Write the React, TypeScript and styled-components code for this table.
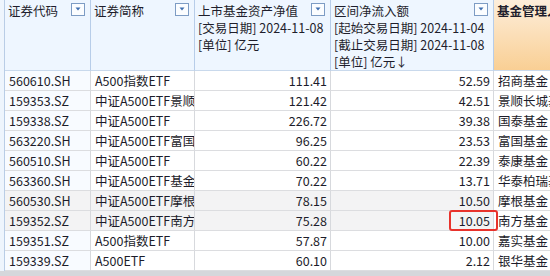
import React from 'react'
import styled, { createGlobalStyle } from 'styled-components'

interface Row {
    code: string
    name: string
    nav: string
    flow: string
    manager: string
    shaded?: boolean
    marked?: boolean
}

const rows: Row[] = [
    { code: '560610.SH', name: 'A500指数ETF', nav: '111.41', flow: '52.59', manager: '招商基金' },
    { code: '159353.SZ', name: '中证A500ETF景顺', nav: '121.42', flow: '42.51', manager: '景顺长城基金' },
    { code: '159338.SZ', name: '中证A500ETF', nav: '226.72', flow: '39.38', manager: '国泰基金' },
    { code: '563220.SH', name: '中证A500ETF富国', nav: '96.25', flow: '23.53', manager: '富国基金' },
    { code: '560510.SH', name: '中证A500ETF', nav: '60.22', flow: '22.39', manager: '泰康基金' },
    { code: '563360.SH', name: '中证A500ETF基金', nav: '70.22', flow: '13.71', manager: '华泰柏瑞基金' },
    { code: '560530.SH', name: '中证A500ETF摩根', nav: '78.15', flow: '10.50', manager: '摩根基金', shaded: true },
    { code: '159352.SZ', name: '中证A500ETF南方', nav: '75.28', flow: '10.05', manager: '南方基金', shaded: true, marked: true },
    { code: '159351.SZ', name: 'A500指数ETF', nav: '57.87', flow: '10.00', manager: '嘉实基金' },
    { code: '159339.SZ', name: 'A500ETF', nav: '60.10', flow: '2.12', manager: '银华基金' },
]

const FilterIcon = () => (
    <FilterBox>
        <svg width='14' height='13' viewBox='0 0 14 13'>
            <rect x='0.5' y='0.5' width='13' height='12' fill='#fbfdff' stroke='#7d9cc4' />
            <path d='M4.5 4.5 L9.5 4.5 L7 7.5 Z' fill='#3f6fb0' />
        </svg>
    </FilterBox>
)

const App = () => {
    return (
        <>
            <GlobalStyle />
            <Frame>
                <Grid>
                    <HeadCell>
                        <HeadLine>证券代码</HeadLine>
                        <FilterIcon />
                    </HeadCell>
                    <HeadCell>
                        <HeadLine>证券简称</HeadLine>
                        <FilterIcon />
                    </HeadCell>
                    <HeadCell>
                        <HeadLine>上市基金资产净值</HeadLine>
                        <HeadLine>[交易日期] 2024-11-08</HeadLine>
                        <HeadLine>[单位] 亿元</HeadLine>
                        <FilterIcon />
                    </HeadCell>
                    <HeadCell>
                        <HeadLine>区间净流入额</HeadLine>
                        <HeadLine>[起始交易日期] 2024-11-04</HeadLine>
                        <HeadLine>[截止交易日期] 2024-11-08</HeadLine>
                        <HeadLine>[单位] 亿元↓</HeadLine>
                        <FilterIcon />
                    </HeadCell>
                    <HeadCell $accent>
                        <HeadLine $bold>基金管理人</HeadLine>
                    </HeadCell>

                    {rows.map((r) => (
                        <React.Fragment key={r.code}>
                            <Cell $shaded={r.shaded} $first>{r.code}</Cell>
                            <Cell $shaded={r.shaded}>{r.name}</Cell>
                            <Cell $shaded={r.shaded} $num>{r.nav}</Cell>
                            <Cell $shaded={r.shaded} $num>
                                {r.flow}
                                {r.marked && <Highlight />}
                            </Cell>
                            <Cell $last>{r.manager}</Cell>
                        </React.Fragment>
                    ))}
                </Grid>
                <BottomBar />
            </Frame>
        </>
    )
}

const GlobalStyle = createGlobalStyle`
    html, body {
        margin: 0;
        padding: 0;
        background: #ffffff;
        overflow: hidden;
    }
    body {
        font-family: 'Noto Sans CJK SC', 'Noto Sans', sans-serif;
        font-size: 12px;
        color: #1c1c2a;
    }
`

const Frame = styled.div`
    width: 550px;
    height: 276px;
    background: #eef5fd;
    padding-left: 4px;
    box-sizing: border-box;
    overflow: hidden;
`

const Grid = styled.div`
    display: grid;
    grid-template-columns: 86px 104px 136px 163px 80px;
    grid-template-rows: 71px repeat(10, 20px);
    border-left: 1px solid #b9cde6;
    width: max-content;
`

const HeadCell = styled.div<{ $accent?: boolean }>`
    position: relative;
    display: flex;
    flex-direction: column;
    padding: 2px 0 0 3px;
    background: ${(p) => (p.$accent ? 'linear-gradient(#fdeedb, #f9cf94)' : '#eef6ff')};
    border-right: 1px solid #b7cde9;
    border-bottom: 1px solid #c9d9ec;
    box-sizing: border-box;
    overflow: hidden;
    white-space: nowrap;
`

const HeadLine = styled.div<{ $bold?: boolean }>`
    height: 17px;
    line-height: 17px;
    font-size: 12.5px;
    font-weight: ${(p) => (p.$bold ? 700 : 400)};
    color: #1e1e2c;
`

const FilterBox = styled.div`
    position: absolute;
    top: 3px;
    right: 5px;
    line-height: 0;
`

const Cell = styled.div<{ $shaded?: boolean; $num?: boolean; $first?: boolean; $last?: boolean }>`
    position: relative;
    display: flex;
    align-items: center;
    justify-content: ${(p) => (p.$num ? 'flex-end' : 'flex-start')};
    padding: ${(p) => (p.$num ? '0 3px 0 0' : '0 0 0 4px')};
    background: ${(p) => (p.$shaded ? '#f3f3f4' : p.$first ? '#f8fbff' : '#ffffff')};
    border-right: ${(p) => (p.$last ? 'none' : '1px solid #d7d9dd')};
    border-bottom: 1px solid #dcdde0;
    box-sizing: border-box;
    white-space: nowrap;
    overflow: ${(p) => (p.$num ? 'visible' : 'hidden')};
    font-size: 12.5px;
    line-height: 19px;
`

const Highlight = styled.span`
    position: absolute;
    width: 49px;
    right: -5px;
    top: -1px;
    bottom: -1px;
    border: 2px solid #e8322b;
    border-radius: 3px;
    box-sizing: border-box;
    z-index: 2;
    pointer-events: none;
`

const BottomBar = styled.div`
    height: 6px;
    background: #d5d7db;
    margin-left: -4px;
`

export default App
